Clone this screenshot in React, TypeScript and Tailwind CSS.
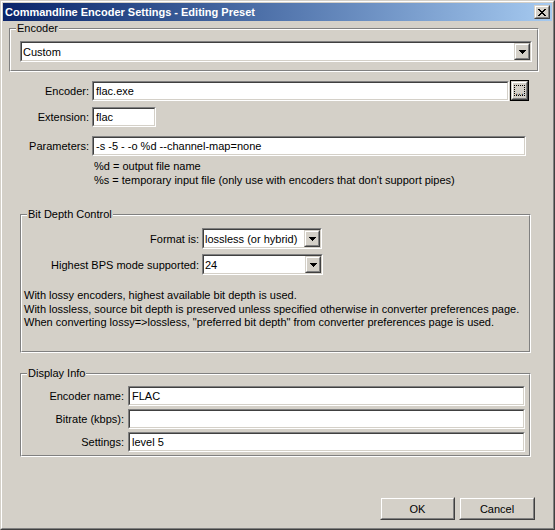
import type { ReactNode } from 'react'

const face = "font-['Liberation_Sans',Arial,sans-serif]"

function Raised({ className = '', children }: { className?: string; children?: ReactNode }) {
  return (
    <div className={`border border-t-[#d4d0c8] border-l-[#d4d0c8] border-b-[#404040] border-r-[#404040] bg-[#d4d0c8] ${className}`}>
      <div className="h-full border border-t-white border-l-white border-b-[#808080] border-r-[#808080] flex items-center justify-center">
        {children}
      </div>
    </div>
  )
}

function Sunken({ className = '', children }: { className?: string; children?: ReactNode }) {
  return (
    <div className={`border border-t-[#808080] border-l-[#808080] border-b-white border-r-white ${className}`}>
      <div className="h-full border border-t-[#404040] border-l-[#404040] border-b-[#d4d0c8] border-r-[#d4d0c8] bg-white flex items-center">
        {children}
      </div>
    </div>
  )
}

function Arrow() {
  return (
    <svg width="7" height="4" viewBox="0 0 7 4" shapeRendering="crispEdges">
      <path d="M0 0h7v1H0zM1 1h5v1H1zM2 2h3v1H2zM3 3h1v1H3z" fill="#000" />
    </svg>
  )
}

function TextBox({ value, className = '' }: { value: string; className?: string }) {
  return (
    <Sunken className={className}>
      <span className="pl-[2px] whitespace-nowrap">{value}</span>
    </Sunken>
  )
}

function Combo({ value, className = '' }: { value: string; className?: string }) {
  return (
    <Sunken className={className}>
      <span className="flex-1 pl-[1px] whitespace-nowrap">{value}</span>
      <Raised className="w-[16px] h-full">
        <Arrow />
      </Raised>
    </Sunken>
  )
}

function Group({ label, className = '', children }: { label: string; className?: string; children?: ReactNode }) {
  return (
    <div className={`relative border border-t-[#808080] border-l-[#808080] border-b-white border-r-white ${className}`}>
      <div className="h-full border border-t-white border-l-white border-b-[#808080] border-r-[#808080]">
        {children}
      </div>
      <span className="absolute left-[6px] top-[-8px] bg-[#d4d0c8] px-[1px] leading-[14px]">{label}</span>
    </div>
  )
}

function CloseGlyph() {
  return (
    <svg width="8" height="7" viewBox="0 0 8 7" shapeRendering="crispEdges">
      <path
        d="M0 0h2v1H0zM6 0h2v1H6zM1 1h2v1H1zM5 1h2v1H5zM2 2h4v1H2zM3 3h2v1H3zM2 4h4v1H2zM1 5h2v1H1zM5 5h2v1H5zM0 6h2v1H0zM6 6h2v1H6z"
        fill="#000"
      />
    </svg>
  )
}

export default function App() {
  return (
    <div className={`w-[555px] h-[530px] text-[11px] leading-[14px] text-black select-none ${face}`}>
      <div className="h-full border border-t-[#d4d0c8] border-l-[#d4d0c8] border-b-[#404040] border-r-[#404040] bg-[#d4d0c8]">
        <div className="h-full border border-t-white border-l-white border-b-[#808080] border-r-[#808080] p-px flex flex-col">

          {/* Title bar */}
          <div className="h-[18px] flex items-center justify-between bg-linear-to-r from-[#0a246a] to-[#a6caf0] pl-[2px] pr-[2px]">
            <span className="text-white font-bold whitespace-nowrap">Commandline Encoder Settings - Editing Preset</span>
            <Raised className="w-[16px] h-[14px]">
              <CloseGlyph />
            </Raised>
          </div>

          {/* Encoder preset */}
          <Group label="Encoder" className="mt-[7px] ml-[6px] w-[530px] h-[44px]">
            <div className="pt-[11px] pl-[9px]">
              <Combo value="Custom" className="w-[512px] h-[21px]" />
            </div>
          </Group>

          {/* Command line */}
          <div className="mt-[8px] flex items-center">
            <span className="w-[89px] text-right pr-[3px]">Encoder:</span>
            <TextBox value="flac.exe" className="w-[417px] h-[20px]" />
            <div className="ml-[1px] w-[19px] h-[21px] border border-black">
              <Raised className="h-full">
                <div className="w-[11px] h-[11px] border border-dotted border-black flex items-end justify-center leading-[6px] text-[10px] overflow-hidden">...</div>
              </Raised>
            </div>
          </div>

          <div className="mt-[6px] flex items-center">
            <span className="w-[89px] text-right pr-[3px]">Extension:</span>
            <TextBox value="flac" className="w-[64px] h-[20px]" />
          </div>

          <div className="mt-[9px] flex items-center">
            <span className="w-[89px] text-right pr-[3px]">Parameters:</span>
            <TextBox value="-s -5 - -o %d --channel-map=none" className="w-[434px] h-[20px]" />
          </div>

          <div className="mt-[3px] pl-[91px]">
            <div>%d = output file name</div>
            <div>%s = temporary input file (only use with encoders that don't support pipes)</div>
          </div>

          {/* Bit depth */}
          <Group label="Bit Depth Control" className="mt-[27px] ml-[17px] w-[511px] h-[139px]">
            <div className="pt-[12px]">
              <div className="flex items-center">
                <span className="w-[180px] text-right pr-[3px]">Format is:</span>
                <Combo value="lossless (or hybrid)" className="w-[120px] h-[21px]" />
              </div>
              <div className="mt-[5px] flex items-center">
                <span className="w-[180px] text-right pr-[3px]">Highest BPS mode supported:</span>
                <Combo value="24" className="w-[121px] h-[21px]" />
              </div>
              <div className="mt-[14px] pl-[2px] leading-[13.5px]">
                <div>With lossy encoders, highest available bit depth is used.</div>
                <div>With lossless, source bit depth is preserved unless specified otherwise in converter preferences page.</div>
                <div>When converting lossy=&gt;lossless, "preferred bit depth" from converter preferences page is used.</div>
              </div>
            </div>
          </Group>

          {/* Display info */}
          <Group label="Display Info" className="mt-[20px] ml-[17px] w-[511px] h-[84px]">
            <div className="pt-[11px] flex flex-col gap-[3px]">
              <div className="flex items-center">
                <span className="w-[106px] text-right pr-[4px]">Encoder name:</span>
                <TextBox value="FLAC" className="w-[397px] h-[20px]" />
              </div>
              <div className="flex items-center">
                <span className="w-[106px] text-right pr-[4px]">Bitrate (kbps):</span>
                <TextBox value="" className="w-[397px] h-[20px]" />
              </div>
              <div className="flex items-center">
                <span className="w-[106px] text-right pr-[4px]">Settings:</span>
                <TextBox value="level 5" className="w-[397px] h-[20px]" />
              </div>
            </div>
          </Group>

          {/* Buttons */}
          <div className="mt-auto mb-[7px] mr-[17px] flex justify-end gap-[4px]">
            <Raised className="w-[75px] h-[23px]">OK</Raised>
            <Raised className="w-[76px] h-[23px]">Cancel</Raised>
          </div>
        </div>
      </div>
    </div>
  )
}
